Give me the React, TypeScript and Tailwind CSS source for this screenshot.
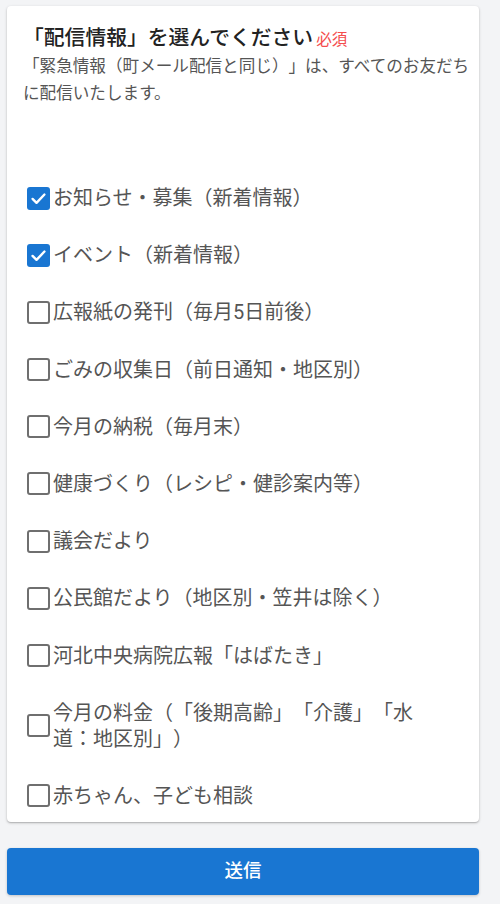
import { useState } from "react";

const items = [
    "お知らせ・募集（新着情報）",
    "イベント（新着情報）",
    "広報紙の発刊（毎月5日前後）",
    "ごみの収集日（前日通知・地区別）",
    "今月の納税（毎月末）",
    "健康づくり（レシピ・健診案内等）",
    "議会だより",
    "公民館だより（地区別・笠井は除く）",
    "河北中央病院広報「はばたき」",
    "今月の料金（「後期高齢」「介護」「水道：地区別」）",
    "赤ちゃん、子ども相談",
];

function CheckItem({ label, checked, onToggle }: { label: string; checked: boolean; onToggle: () => void }) {
    return (
        <label className="flex items-center cursor-pointer" onClick={onToggle}>
            <span
                className={
                    checked
                        ? "ml-1 flex h-[23px] w-[23px] shrink-0 items-center justify-center rounded-[3px] bg-[#1976d2]"
                        : "ml-1 h-[23px] w-[23px] shrink-0 rounded-[3px] border-[2.5px] border-[#6f6f6f] bg-white"
                }
            >
                {checked && (
                    <svg viewBox="0 0 24 24" className="h-[19px] w-[19px]" fill="none">
                        <path d="M4.5 12.5l5 5L19.5 7" stroke="white" strokeWidth="3" strokeLinecap="round" strokeLinejoin="round" />
                    </svg>
                )}
            </span>
            <span className="ml-[3px] max-w-[385px] text-[20px] leading-[26px] text-[#555]">{label}</span>
        </label>
    );
}

export default function App() {
    const [checked, setChecked] = useState<boolean[]>(items.map((_, i) => i < 2));

    const toggle = (i: number) => {
        setChecked((prev) => prev.map((v, j) => (j === i ? !v : v)));
    };

    return (
        <main
            className="min-h-[904px] bg-[#f3f4f6] pt-[6px] [text-spacing-trim:space-all]"
            style={{ fontFamily: "Roboto, 'Noto Sans CJK JP', sans-serif" }}
        >
            <div className="ml-[7px] w-[472px] rounded-[4px] bg-white px-4 pt-[19px] pb-[13px] shadow-[0_1px_3px_rgba(0,0,0,0.22),0_1px_1px_rgba(0,0,0,0.12)]">
                <h2 className="text-[20.8px] leading-[26px] font-medium text-[#222]">
                    「配信情報」を選んでください
                    <span className="ml-[3px] text-[15.5px] font-normal text-[#f44d4d]">必須</span>
                </h2>
                <p className="-mr-3 text-[16.6px] leading-[27px] text-[#555]">
                    「緊急情報（町メール配信と同じ）」は、すべてのお友だちに配信いたします。
                </p>

                <div className="mt-[78px] flex flex-col gap-[31.2px]">
                    {items.map((label, i) => (
                        <CheckItem key={label} label={label} checked={checked[i]} onToggle={() => toggle(i)} />
                    ))}
                </div>
            </div>

            <button className="mt-[26px] ml-[7px] h-[47px] w-[472px] rounded-[4px] bg-[#1976d2] text-[18.5px] font-medium text-white shadow-[0_1px_3px_rgba(0,0,0,0.2)]">
                送信
            </button>
        </main>
    );
}
